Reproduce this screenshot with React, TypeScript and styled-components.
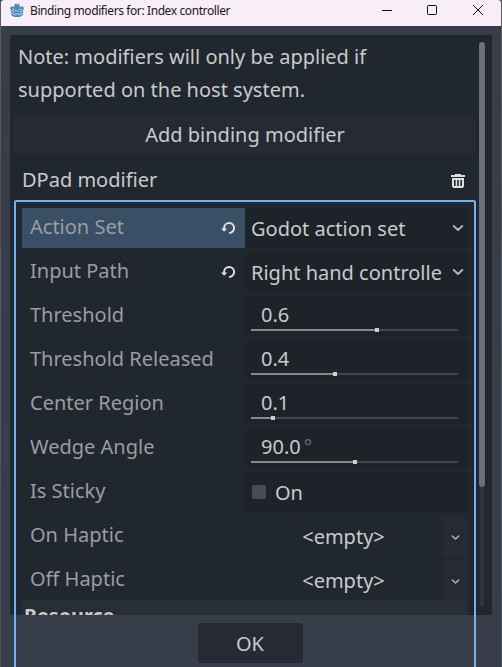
import React from "react";
import styled, { createGlobalStyle } from "styled-components";

const GlobalStyle = createGlobalStyle`
  * { box-sizing: border-box; }
  html, body { margin: 0; padding: 0; overflow: hidden; background: #55504f; }
`;

const Desktop = styled.div`
  width: 502px;
  height: 667px;
  padding: 0 1px;
  overflow: hidden;
  background: linear-gradient(#625b5d 0, #55504f 230px, #555b66 260px, #4c505a 667px);
`;

const Window = styled.main`
  position: relative;
  display: flex;
  flex-direction: column;
  width: 500px;
  height: 667px;
  overflow: hidden;
  background: #383d4a;
  color: #c8cacc;
  font: 20px/28px "Noto Sans", sans-serif;
  white-space: nowrap;
`;

const TitleBar = styled.header`
  display: flex;
  flex: none;
  height: 26px;
  padding: 0 18px 0 8px;
  background: #f8eef7;
  color: #1a181a;
  border-top-left-radius: 3px;
  border-top-right-radius: 3px;
`;

const Logo = styled.svg`
  width: 16px;
  height: 16px;
  margin-top: 2px;
`;

const WindowTitle = styled.h1`
  flex: 1;
  margin: 0 0 0 5px;
  font-size: 12px;
  font-weight: 400;
  line-height: 22px;
  letter-spacing: -0.4px;
`;

const WindowButtons = styled.div`
  display: flex;
  gap: 35px;
  padding-top: 5px;
  svg { width: 10px; height: 10px; overflow: visible; }
  svg:last-child { margin-left: 1px; }
`;

const Panel = styled.section`
  display: flex;
  flex: none;
  height: 580px;
  margin: 9px 9px 0;
  padding: 4px 7px 0 4px;
  overflow: hidden;
  border-radius: 2px;
  background: #21272e;
`;

const Content = styled.div`
  width: 462px;
  flex: none;
`;

const Note = styled.p`
  height: 33px;
  margin: 0;
  padding-left: 4px;
  line-height: 36px;
`;

const AddButton = styled.button`
  display: block;
  width: 462px;
  height: 40px;
  margin: 9px 0 0;
  padding: 0;
  border: 0;
  border-radius: 3px;
  background: #262a34;
  color: inherit;
  font: inherit;
  line-height: 42px;
`;

const ModifierHeader = styled.div`
  display: flex;
  justify-content: space-between;
  height: 54px;
  padding: 12px 10px 0 8px;
  svg { width: 16px; height: 16px; margin-top: 7px; }
`;

const Properties = styled.div`
  display: flex;
  flex-direction: column;
  gap: 4px;
  padding: 0 8px;
`;

const Row = styled.div`
  display: grid;
  grid-template-columns: 223px 223px;
  height: 40px;
`;

const Label = styled.div<{ $selected?: boolean }>`
  display: flex;
  justify-content: space-between;
  align-items: flex-start;
  padding: 5px 9px 0 8px;
  color: #9b9da0;
  background: ${(p) => (p.$selected ? "#384f66" : "transparent")};
  svg { width: 16px; height: 16px; margin-top: 7px; }
`;

const Field = styled.div<{ $plain?: boolean }>`
  height: 40px;
  border-radius: 3px;
  background: ${(p) => (p.$plain ? "transparent" : "#1d2329")};
`;

const Select = styled(Field)`
  display: flex;
  justify-content: space-between;
  padding: 7px 4px 0 6px;
  svg { width: 12px; height: 12px; margin-top: 7px; }
`;

const Range = styled(Field)`
  padding: 5px 10px 0 6px;
`;

const Amount = styled.div`
  height: 28px;
  padding-left: 10px;
  sup {
    margin-left: 3px;
    color: #6b6e74;
    font-size: 20px;
    line-height: 0;
    vertical-align: baseline;
  }
`;

const Track = styled.div`
  display: flex;
  align-items: center;
  height: 2px;
  background: #43464d;
`;

const Filled = styled.div`
  flex: none;
  height: 2px;
  background: #85878a;
`;

const Grabber = styled.div`
  flex: none;
  width: 4px;
  height: 4px;
  background: #cdced0;
`;

const Toggle = styled(Field)`
  display: flex;
  gap: 9px;
  padding: 7px 7px 0;
`;

const CheckBox = styled.span`
  width: 14px;
  height: 14px;
  margin-top: 6px;
  border-radius: 2px;
  background: #484b51;
`;

const Resource = styled(Field)`
  display: grid;
  grid-template-columns: 197px 26px;
  text-align: center;
  line-height: 42px;
`;

const MenuButton = styled.div`
  display: flex;
  align-items: center;
  justify-content: center;
  border-radius: 3px;
  background: #262a34;
  svg { width: 9px; height: 9px; margin-top: 1px; }
`;

const Section = styled.div`
  height: 40px;
  margin: 0 8px;
  padding: 1px 0 0 2px;
  background: #282e35;
  font-size: 19.8px;
  font-weight: 700;
  line-height: 30px;
`;

const ScrollTrack = styled.div`
  width: 4px;
  height: 565px;
  margin: 3px 0 0 4px;
  flex: none;
  border-radius: 2px;
  background: #30333a;
`;

const ScrollThumb = styled.div`
  width: 6px;
  height: 445px;
  margin-left: -1px;
  border-radius: 3px;
  background: #6d7076;
`;

const Footer = styled.footer`
  display: flex;
  justify-content: center;
  padding: 8px 1px 0 0;
`;

const OkButton = styled.button`
  width: 105px;
  height: 40px;
  padding: 0 1px 0 0;
  border: 0;
  border-radius: 3px;
  background: #262a34;
  color: inherit;
  font: inherit;
  line-height: 42px;
`;

/* Focus outline drawn above the panel and footer. */
const FocusOutline = styled.div`
  position: absolute;
  top: 200px;
  left: 13px;
  width: 462px;
  height: 480px;
  border: 2px solid #70b2f0;
  border-radius: 2px;
  pointer-events: none;
`;

const GodotLogo = () => (
  <Logo viewBox="0 0 16 16">
    <path
      d="M1 6.2 2.5 4l1.7 1 1.3-.8V2.2L7.2 1.4 8 3.2 8.8 1.4l1.7.8v2l1.3.8 1.7-1L15 6.2l-.9 1.5v4.5C13.2 14.2 11 15 8 15s-5.2-.8-6.1-2.8V7.7z"
      fill="#478cbf"
    />
    <circle cx="4.9" cy="8.4" r="1.6" fill="#e8f0f7" />
    <circle cx="11.1" cy="8.4" r="1.6" fill="#e8f0f7" />
    <circle cx="5.1" cy="8.5" r=".9" fill="#414a55" />
    <circle cx="10.9" cy="8.5" r=".9" fill="#414a55" />
    <path d="M8 8v1.8M2 11.2l2.7.3v1.2h2v-.9h2.6v.9h2v-1.2l2.7-.3" fill="none" stroke="#d3e3f0" strokeWidth=".75" />
  </Logo>
);

const Revert = () => (
  <svg viewBox="0 0 16 16">
    <path d="M4.1 9.2V8a5 5 0 1 1 5 5" fill="none" stroke="#e0e0e0" strokeWidth="2" />
    <path d="M1 8.4h6.2L4.1 11.8z" fill="#e0e0e0" />
  </svg>
);

const Trash = () => (
  <svg viewBox="0 0 16 16">
    <path
      d="M5 1h6v1h4v2H1V2h4zM2 5h12v8.5l-1.5 1.5h-9L2 13.5zm2 2v6h1.6V7zm3.2 0v6h1.6V7zm3.2 0v6H12V7z"
      fill="#e0e0e0"
      fillRule="evenodd"
    />
  </svg>
);

const Chevron = () => (
  <svg viewBox="0 0 12 12">
    <path d="m1.7 4 4.3 4 4.3-4" fill="none" stroke="#b1b4b7" strokeWidth="2" strokeLinecap="round" strokeLinejoin="round" />
  </svg>
);

const sliders = [
  { label: "Threshold", value: "0.6", filled: 124 },
  { label: "Threshold Released", value: "0.4", filled: 82 },
  { label: "Center Region", value: "0.1", filled: 20 },
  { label: "Wedge Angle", value: "90.0", filled: 102, unit: "°" },
];

export default function App() {
  return (
    <Desktop>
      <GlobalStyle />
      <Window>
        <TitleBar>
          <GodotLogo />
          <WindowTitle>Binding modifiers for: Index controller</WindowTitle>
          <WindowButtons>
            <svg viewBox="0 0 10 10"><path d="M0 5.5h10" stroke="#111" /></svg>
            <svg viewBox="0 0 10 10"><rect x=".5" y=".5" width="9" height="9" rx=".8" fill="none" stroke="#111" /></svg>
            <svg viewBox="0 0 10 10"><path d="m0 0 10 10M10 0 0 10" stroke="#111" /></svg>
          </WindowButtons>
        </TitleBar>
        <Panel>
          <Content>
            <Note>Note: modifiers will only be applied if</Note>
            <Note>supported on the host system.</Note>
            <AddButton>Add binding modifier</AddButton>
            <ModifierHeader>
              DPad modifier
              <Trash />
            </ModifierHeader>
            <Properties>
              <Row>
                <Label $selected>Action Set<Revert /></Label>
                <Select>Godot action set<Chevron /></Select>
              </Row>
              <Row>
                <Label>Input Path<Revert /></Label>
                <Select>Right hand controlle<Chevron /></Select>
              </Row>
              {sliders.map((s) => (
                <Row key={s.label}>
                  <Label>{s.label}</Label>
                  <Range>
                    <Amount>{s.value}{s.unit && <sup>{s.unit}</sup>}</Amount>
                    <Track>
                      <Filled style={{ width: s.filled }} />
                      <Grabber />
                    </Track>
                  </Range>
                </Row>
              ))}
              <Row>
                <Label>Is Sticky</Label>
                <Toggle><CheckBox />On</Toggle>
              </Row>
              {["On Haptic", "Off Haptic"].map((label) => (
                <Row key={label}>
                  <Label>{label}</Label>
                  <Resource $plain>
                    &lt;empty&gt;
                    <MenuButton><Chevron /></MenuButton>
                  </Resource>
                </Row>
              ))}
            </Properties>
            <Section>Resource</Section>
          </Content>
          <ScrollTrack><ScrollThumb /></ScrollTrack>
        </Panel>
        <Footer><OkButton>OK</OkButton></Footer>
        <FocusOutline />
      </Window>
    </Desktop>
  );
}
